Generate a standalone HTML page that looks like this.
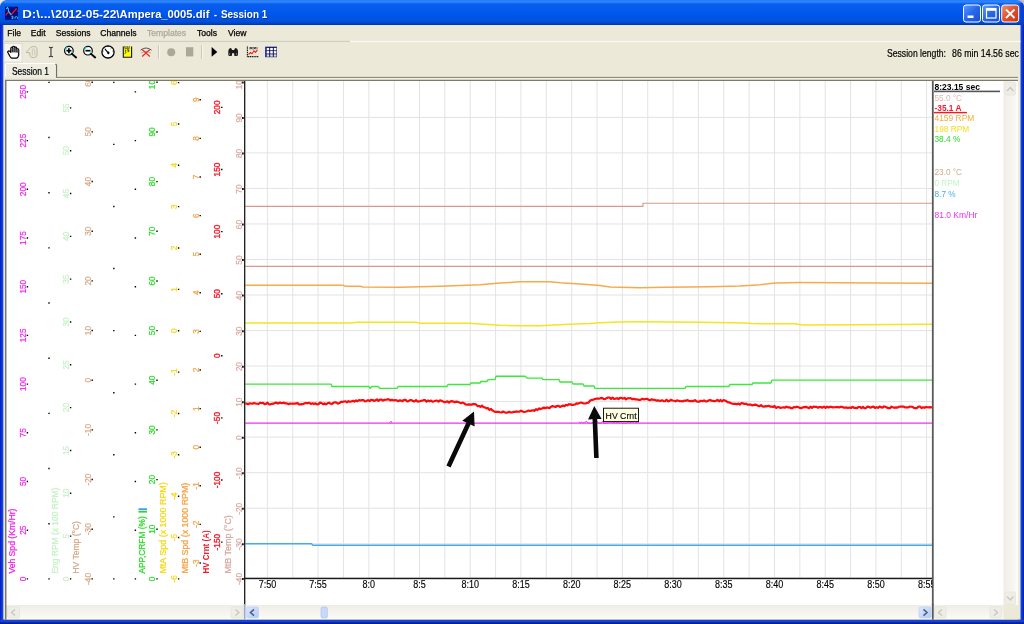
<!DOCTYPE html>
<html><head><meta charset="utf-8"><title>Ampera_0005.dif - Session 1</title>
<style>
html,body{margin:0;padding:0;width:1024px;height:624px;overflow:hidden;background:#ECE9D8;font-family:"Liberation Sans", sans-serif;}
.abs{position:absolute;will-change:transform;}
.menu span{position:absolute;top:26.5px;font-size:8.6px;color:#000;white-space:pre;line-height:12px;-webkit-text-stroke:0.25px currentColor;}
</style></head><body>

<svg class="abs" style="left:0;top:0" width="1024" height="624" viewBox="0 0 1024 624" font-family='"Liberation Sans", sans-serif'>
<defs>
<linearGradient id="tb" x1="0" y1="0" x2="0" y2="1">
<stop offset="0" stop-color="#2B7BF5"/><stop offset="0.08" stop-color="#2E86FF"/><stop offset="0.16" stop-color="#0A5EEC"/>
<stop offset="0.5" stop-color="#0058EE"/><stop offset="0.85" stop-color="#0050DD"/><stop offset="0.93" stop-color="#0046C8"/><stop offset="1" stop-color="#0035A8"/>
</linearGradient>
<linearGradient id="btn" x1="0" y1="0" x2="1" y2="1">
<stop offset="0" stop-color="#5C9CFF"/><stop offset="0.5" stop-color="#2766EC"/><stop offset="1" stop-color="#1A4FD0"/>
</linearGradient>
<linearGradient id="cls" x1="0" y1="0" x2="1" y2="1">
<stop offset="0" stop-color="#F09070"/><stop offset="0.5" stop-color="#E0502A"/><stop offset="1" stop-color="#C83A14"/>
</linearGradient>
<linearGradient id="sbh" x1="0" y1="0" x2="0" y2="1">
<stop offset="0" stop-color="#EEEDE5"/><stop offset="0.5" stop-color="#F5F4EF"/><stop offset="1" stop-color="#FBFBF8"/>
</linearGradient>
<linearGradient id="sbv" x1="0" y1="0" x2="1" y2="0">
<stop offset="0" stop-color="#EEEDE5"/><stop offset="0.5" stop-color="#F5F4EF"/><stop offset="1" stop-color="#FBFBF8"/>
</linearGradient>
<linearGradient id="arrb" x1="0" y1="0" x2="1" y2="1">
<stop offset="0" stop-color="#DCE8FE"/><stop offset="1" stop-color="#B4CBF6"/>
</linearGradient>
<clipPath id="chart"><rect x="6.5" y="81" width="997" height="524"/></clipPath>
<clipPath id="plot"><rect x="245.5" y="81" width="687" height="524"/></clipPath>
</defs>
<rect x="0" y="0" width="1024" height="624" fill="#0A3FD8"/>
<rect x="0" y="0" width="1024" height="25" fill="url(#tb)"/>
<linearGradient id="lb" x1="0" y1="0" x2="1" y2="0"><stop offset="0" stop-color="#0A18C8"/><stop offset="1" stop-color="#0A52EA"/></linearGradient>
<linearGradient id="rb" x1="0" y1="0" x2="1" y2="0"><stop offset="0" stop-color="#0A52EA"/><stop offset="1" stop-color="#0A18B8"/></linearGradient>
<rect x="0" y="25" width="3.3" height="599" fill="url(#lb)"/>
<rect x="1020.5" y="25" width="3.5" height="599" fill="url(#rb)"/>
<rect x="0" y="619.6" width="1024" height="1" fill="#3A4A8A"/>
<rect x="0" y="620.6" width="1024" height="1.8" fill="#0A44F0"/>
<rect x="0" y="622.4" width="1024" height="1.6" fill="#0A1C8C"/>
<rect x="3.3" y="25" width="1017.2" height="594.6" fill="#ECE9D8"/>
<rect x="1020.5" y="3" width="3.5" height="22" fill="#0A3AC8" opacity="0.8"/>
<path d="M1024 0 H1017 Q1023 1 1024 6 Z" fill="#C8B8C8"/>
<path d="M0 0 H6 Q1 1 0 6 Z" fill="#E8E8E8"/>
<rect x="5" y="6.7" width="13" height="13.2" fill="#000C84"/>
<polyline points="5.6,15.4 8.4,11.8 11.6,14.4 16.5,8.4" fill="none" stroke="#F01818" stroke-width="1.3"/>
<path d="M16.5 8.4 L18 12.4" stroke="#B01030" stroke-width="0.9"/>
<polyline points="6.3,8.8 7.5,7.5 8.3,9 8.5,11.2 10.2,13.6 11.3,15.2" fill="none" stroke="#28D0E8" stroke-width="1.1"/>
<path d="M11.4 16.4 H13 V17.4 H11.8 M13 17.4 V18.6 H11.4" fill="none" stroke="#28D0E8" stroke-width="0.9"/>
<path d="M15 18.8 V17.2 Q16.3 15.8 17.6 17.2 V18.8" fill="none" stroke="#28D0E8" stroke-width="1"/>
<text x="23.0" y="18.9" font-size="11.8" font-weight="bold" fill="#0A1E6E" opacity="0.55" textLength="32.6" lengthAdjust="spacingAndGlyphs">D:\...\</text>
<text x="22.2" y="18.2" font-size="11.8" font-weight="bold" fill="#FFFFFF" textLength="32.6" lengthAdjust="spacingAndGlyphs">D:\...\</text>
<text x="56.099999999999994" y="18.9" font-size="11.8" font-weight="bold" fill="#0A1E6E" opacity="0.55" textLength="64.3" lengthAdjust="spacingAndGlyphs">2012-05-22\</text>
<text x="55.3" y="18.2" font-size="11.8" font-weight="bold" fill="#FFFFFF" textLength="64.3" lengthAdjust="spacingAndGlyphs">2012-05-22\</text>
<text x="120.39999999999999" y="18.9" font-size="11.8" font-weight="bold" fill="#0A1E6E" opacity="0.55" textLength="89.8" lengthAdjust="spacingAndGlyphs">Ampera_0005.dif</text>
<text x="119.6" y="18.2" font-size="11.8" font-weight="bold" fill="#FFFFFF" textLength="89.8" lengthAdjust="spacingAndGlyphs">Ampera_0005.dif</text>
<text x="214.8" y="18.9" font-size="11.8" font-weight="bold" fill="#0A1E6E" opacity="0.55" textLength="3.0" lengthAdjust="spacingAndGlyphs">-</text>
<text x="214.0" y="18.2" font-size="11.8" font-weight="bold" fill="#FFFFFF" textLength="3.0" lengthAdjust="spacingAndGlyphs">-</text>
<text x="221.8" y="18.9" font-size="11.8" font-weight="bold" fill="#0A1E6E" opacity="0.55" textLength="46.2" lengthAdjust="spacingAndGlyphs">Session 1</text>
<text x="221.0" y="18.2" font-size="11.8" font-weight="bold" fill="#FFFFFF" textLength="46.2" lengthAdjust="spacingAndGlyphs">Session 1</text>
<rect x="963.5" y="5" width="17" height="17" rx="2.5" fill="url(#btn)" stroke="#FFFFFF" stroke-width="1"/>
<rect x="982.5" y="5" width="17" height="17" rx="2.5" fill="url(#btn)" stroke="#FFFFFF" stroke-width="1"/>
<rect x="1001.7" y="5" width="17" height="17" rx="2.5" fill="url(#cls)" stroke="#FFFFFF" stroke-width="1"/>
<rect x="967.5" y="15.5" width="6" height="2.5" fill="#FFFFFF"/>
<rect x="986.5" y="8.5" width="9.5" height="9.5" fill="none" stroke="#FFFFFF" stroke-width="1.2"/><rect x="986.5" y="8.5" width="9.5" height="2.3" fill="#FFFFFF"/>
<path d="M1006 9.5 L1014.5 18 M1014.5 9.5 L1006 18" stroke="#FFFFFF" stroke-width="1.8"/>
<rect x="3.5" y="40.8" width="1017" height="1.3" fill="#FAF9F4"/>
<rect x="3.5" y="40.8" width="346.5" height="1.3" fill="#CFCDC4"/>
<rect x="4" y="43.5" width="18" height="18.5" fill="#F6F5F0" stroke="#D5D2C4" stroke-width="0.6"/>
<rect x="158.3" y="45" width="1" height="14" fill="#BDB9A8"/><rect x="159.3" y="45" width="0.8" height="14" fill="#FFFFFF"/>
<rect x="201.3" y="45" width="1" height="14" fill="#BDB9A8"/><rect x="202.3" y="45" width="0.8" height="14" fill="#FFFFFF"/>
<path d="M7.6 51.9 L8.7 50.8 Q9.6 50.6 10.7 52.3 L10.8 48.3 Q11.3 46.6 12.5 47.6 L12.6 46.9 Q13.6 45.6 14.6 46.9 L14.7 47.3 Q15.8 46.6 16.6 47.9 L16.7 48.7 Q18 48.4 18.7 49.8 L18.7 55.2 Q18.2 57.7 16.5 58.1 L11.6 58.1 Q10.6 57.8 9.6 55.8 Z" fill="#FFFFFF" stroke="#000" stroke-width="1.2" stroke-linejoin="round"/>
<path d="M11.7 48.2 V52.6 M13.6 47.5 V52.4 M15.6 48 V52.6 M17.6 49.6 V52.8" stroke="#6A6A6A" stroke-width="1.5"/>
<path d="M12.5 47.5 V52.2 M14.6 47.2 V52.2 M16.6 48.2 V52.4" stroke="#000" stroke-width="0.7"/>
<path d="M26.2 52.6 L29.6 48.4 Q31 46.6 33 46.6 L35.2 46.6 Q37 47.2 37 49.2 L37 55.2 Q36.5 57.4 34.6 57.5 L31.8 57.5 Q30.2 57.2 30 55.6 L30 52.8 Z" fill="none" stroke="#B5B2A3" stroke-width="0.9" stroke-linejoin="round"/>
<path d="M31.6 49.2 Q33.4 48.4 34.8 49.6 L34.8 55.5 M32.4 50 V55.5" fill="none" stroke="#C2BFB1" stroke-width="0.8"/>
<path d="M48.9 47.3 Q50 47 50.95 48 Q52 47 53 47.3 M50.95 48 V56 M48.9 56.6 Q50 56.8 50.95 56 Q52 56.8 53 56.6" stroke="#3A3A3A" stroke-width="1.1" fill="none"/>
<circle cx="68.9" cy="50.7" r="4.3" fill="#FFFFFF" stroke="#000" stroke-width="1.2"/>
<path d="M65.5 49.6 Q66.30000000000001 47.2 68.30000000000001 47.1" stroke="#22D8F0" stroke-width="1.3" fill="none"/>
<path d="M70.5 53.8 Q72.2 53 72.5 51.6" stroke="#22D8F0" stroke-width="1.1" fill="none"/>
<path d="M71.9 53.9 L76.10000000000001 57.5" stroke="#000" stroke-width="1.9" stroke-linecap="round"/>
<path d="M66.4 50.7 H71.4" stroke="#000" stroke-width="1.7"/>
<path d="M68.9 48.2 V53.2" stroke="#000" stroke-width="1.7"/>
<circle cx="88" cy="50.7" r="4.3" fill="#FFFFFF" stroke="#000" stroke-width="1.2"/>
<path d="M84.6 49.6 Q85.4 47.2 87.4 47.1" stroke="#22D8F0" stroke-width="1.3" fill="none"/>
<path d="M89.6 53.8 Q91.3 53 91.6 51.6" stroke="#22D8F0" stroke-width="1.1" fill="none"/>
<path d="M91 53.9 L95.2 57.5" stroke="#000" stroke-width="1.9" stroke-linecap="round"/>
<path d="M85.5 50.7 H90.5" stroke="#000" stroke-width="1.7"/>
<circle cx="108" cy="51.9" r="6.1" fill="#FFFFFF" stroke="#000" stroke-width="1.3"/>
<path d="M104.4 47.8 L105.3 48.7 M108 45.8 V47.1 M111.6 47.8 L110.7 48.7 M102.2 51.2 H103.4 M113.8 51.2 H112.6" stroke="#000" stroke-width="0.9"/>
<path d="M105 49.2 L108.3 52.8" stroke="#000" stroke-width="1.2"/><path d="M108.3 51.2 L109.8 52.9 L108.3 54.4 L106.9 52.9 Z" fill="#000"/>
<rect x="123.3" y="46.6" width="8.2" height="10.6" fill="#FFFF00"/>
<path d="M123.3 46.6 V57.2 H131.6 V46.6" fill="none" stroke="#10103A" stroke-width="1.1"/>
<path d="M124.3 46.1 V47.6 M126 46.1 V47.6 M127.7 46.1 V47.6 M129.4 46.1 V47.6" stroke="#1A1A1A" stroke-width="0.7"/>
<path d="M124.6 48.2 H129.6 M124.8 50 Q126 49.6 126 51 Q125.2 51.6 125.8 52.4 Q125.6 53.5 124.6 53.6 M127 49.8 H128.8 V51.5 M128.2 50.6 V52.2" stroke="#1A1A1A" stroke-width="0.8" fill="none"/>
<path d="M140.5 50.2 Q146 45.8 151.6 50.2" fill="none" stroke="#444" stroke-width="0.9"/><path d="M141 53.2 Q146 49.8 151 53.2" fill="none" stroke="#9A9A9A" stroke-width="0.8"/><path d="M142.2 49.6 L149.8 56.6 M149.8 49.6 L142.2 56.6" stroke="#E83030" stroke-width="1.3"/>
<circle cx="171.2" cy="52.2" r="4" fill="#ACA899"/>
<rect x="186" y="47.2" width="7.3" height="9.2" fill="#ACA899"/>
<path d="M211.6 47 L217.3 51.9 L211.6 56.8 Z" fill="#000"/>
<path d="M228.3 51 Q228.6 48.5 230.4 48 Q231.8 48.2 232 50 L234.2 50 Q234.5 48.2 235.9 48 Q237.7 48.5 238 51 L238 55 Q237.6 56.2 236 56 L234.6 56 Q234 55.2 234.2 53.2 L232 53.2 Q232.2 55.2 231.6 56 L230.2 56 Q228.6 56.2 228.3 55 Z" fill="#1A1A1A"/>
<path d="M229.6 53 V55 M236.6 53 V55" stroke="#8A8A8A" stroke-width="0.8"/>
<path d="M247.4 46.5 V56.6 H258.3" stroke="#111" stroke-width="1.1" fill="none" stroke-dasharray="1.2,0.6"/>
<path d="M250 47 L252.3 49.5 M252.3 47 L250 49.5 M253.5 47 L256 49.5 M256 47 L253.5 49.5 M249 48 H258" stroke="#222" stroke-width="0.7"/>
<polyline points="248.5,54.5 250.5,52.6 252,53.8 254,50.8 255.5,52.4 257.5,49.8" fill="none" stroke="#F02020" stroke-width="1.1"/>
<path d="M249.5 55.2 H257.5" stroke="#E0E0E0" stroke-width="0.8"/>
<rect x="265.2" y="46.7" width="11.7" height="10.5" fill="#0C1060"/>
<rect x="266.6" y="47.9" width="2.6" height="2.4" fill="#FFFFFF"/>
<rect x="270.2" y="47.9" width="2.6" height="2.4" fill="#FFFFFF"/>
<rect x="273.8" y="47.9" width="2.6" height="2.4" fill="#FFFFFF"/>
<rect x="266.6" y="51.1" width="2.6" height="2.4" fill="#FFFFFF"/>
<rect x="270.2" y="51.1" width="2.6" height="2.4" fill="#FFFFFF"/>
<rect x="273.8" y="51.1" width="2.6" height="2.4" fill="#FFFFFF"/>
<rect x="266.6" y="54.3" width="2.6" height="2.4" fill="#D8D8E0"/>
<rect x="270.2" y="54.3" width="2.6" height="2.4" fill="#D8D8E0"/>
<rect x="273.8" y="54.3" width="2.6" height="2.4" fill="#D8D8E0"/>
<rect x="265.6" y="47.4" width="0.9" height="3" fill="#3040F0"/><rect x="265.6" y="53.6" width="0.9" height="3" fill="#3040F0"/>
<text x="887" y="57" font-size="10.8" fill="#000" stroke="#000" stroke-width="0.2" textLength="59" lengthAdjust="spacingAndGlyphs">Session length:</text>
<text x="952" y="57" font-size="10.8" fill="#000" stroke="#000" stroke-width="0.2" textLength="67" lengthAdjust="spacingAndGlyphs">86 min 14.56 sec</text>
<rect x="56" y="76.9" width="962" height="1" fill="#7E7A6A"/>
<rect x="56" y="77.9" width="962" height="0.8" fill="#FFFFFF" opacity="0.5"/>
<path d="M5.5 77 V64.5 Q5.5 63.5 6.5 63.5 H55 L56 64.5 V77.5" fill="#EFEDE2" stroke="#FFFFFF" stroke-width="1"/>
<path d="M55.5 64 L56.5 65 V77.5" fill="none" stroke="#716F64" stroke-width="1.2"/>
<text x="12" y="74.5" font-size="10.2" fill="#000" stroke="#000" stroke-width="0.2" textLength="37" lengthAdjust="spacingAndGlyphs">Session 1</text>
<rect x="5" y="79.8" width="1013" height="540" fill="#7E7A6A"/>
<rect x="6.5" y="81" width="997.5" height="524" fill="#FFFFFF"/>
</svg>
<svg class="abs" style="left:0;top:0" width="1024" height="624" viewBox="0 0 1024 624" font-family='"Liberation Sans", sans-serif'>
<defs><clipPath id="chart2"><rect x="6.5" y="81" width="997.5" height="524"/></clipPath><clipPath id="plot2"><rect x="245.3" y="81" width="687" height="524"/></clipPath></defs>
<g clip-path="url(#chart2)">
<path d="M246 117.37 H932 M246 152.90 H932 M246 188.43 H932 M246 223.96 H932 M246 259.49 H932 M246 295.02 H932 M246 330.55 H932 M246 366.08 H932 M246 401.61 H932 M246 437.14 H932 M246 472.67 H932 M246 508.20 H932 M246 543.73 H932 M267.40 81 V577.5 M292.75 81 V577.5 M318.11 81 V577.5 M343.46 81 V577.5 M368.82 81 V577.5 M394.17 81 V577.5 M419.53 81 V577.5 M444.88 81 V577.5 M470.24 81 V577.5 M495.59 81 V577.5 M520.95 81 V577.5 M546.31 81 V577.5 M571.66 81 V577.5 M597.01 81 V577.5 M622.37 81 V577.5 M647.72 81 V577.5 M673.08 81 V577.5 M698.43 81 V577.5 M723.79 81 V577.5 M749.14 81 V577.5 M774.50 81 V577.5 M799.86 81 V577.5 M825.21 81 V577.5 M850.56 81 V577.5 M875.92 81 V577.5 M901.27 81 V577.5 M926.63 81 V577.5" stroke="#E3E3E3" stroke-width="1" fill="none"/>
<g transform="translate(0 0.6)">
<path d="M26.70 577.60 h1.4 v1.4 h-1.4 Z M26.70 528.90 h1.4 v1.4 h-1.4 Z M26.70 480.20 h1.4 v1.4 h-1.4 Z M26.70 431.50 h1.4 v1.4 h-1.4 Z M26.70 382.80 h1.4 v1.4 h-1.4 Z M26.70 334.10 h1.4 v1.4 h-1.4 Z M26.70 285.40 h1.4 v1.4 h-1.4 Z M26.70 236.70 h1.4 v1.4 h-1.4 Z M26.70 188.00 h1.4 v1.4 h-1.4 Z M26.70 139.30 h1.4 v1.4 h-1.4 Z M26.70 90.60 h1.4 v1.4 h-1.4 Z M48.30 577.60 h1.4 v1.4 h-1.4 Z M48.30 522.43 h1.4 v1.4 h-1.4 Z M48.30 467.26 h1.4 v1.4 h-1.4 Z M48.30 412.09 h1.4 v1.4 h-1.4 Z M48.30 356.92 h1.4 v1.4 h-1.4 Z M48.30 301.75 h1.4 v1.4 h-1.4 Z M48.30 246.58 h1.4 v1.4 h-1.4 Z M48.30 191.41 h1.4 v1.4 h-1.4 Z M48.30 136.24 h1.4 v1.4 h-1.4 Z M48.30 81.07 h1.4 v1.4 h-1.4 Z M69.90 577.60 h1.4 v1.4 h-1.4 Z M69.90 534.78 h1.4 v1.4 h-1.4 Z M69.90 491.96 h1.4 v1.4 h-1.4 Z M69.90 449.14 h1.4 v1.4 h-1.4 Z M69.90 406.32 h1.4 v1.4 h-1.4 Z M69.90 363.50 h1.4 v1.4 h-1.4 Z M69.90 320.68 h1.4 v1.4 h-1.4 Z M69.90 277.86 h1.4 v1.4 h-1.4 Z M69.90 235.04 h1.4 v1.4 h-1.4 Z M69.90 192.22 h1.4 v1.4 h-1.4 Z M69.90 149.40 h1.4 v1.4 h-1.4 Z M69.90 106.58 h1.4 v1.4 h-1.4 Z M91.50 577.60 h1.4 v1.4 h-1.4 Z M91.50 527.93 h1.4 v1.4 h-1.4 Z M91.50 478.26 h1.4 v1.4 h-1.4 Z M91.50 428.59 h1.4 v1.4 h-1.4 Z M91.50 378.92 h1.4 v1.4 h-1.4 Z M91.50 329.25 h1.4 v1.4 h-1.4 Z M91.50 279.58 h1.4 v1.4 h-1.4 Z M91.50 229.91 h1.4 v1.4 h-1.4 Z M91.50 180.24 h1.4 v1.4 h-1.4 Z M91.50 130.57 h1.4 v1.4 h-1.4 Z M91.50 80.90 h1.4 v1.4 h-1.4 Z M113.10 577.60 h1.4 v1.4 h-1.4 Z M113.10 515.53 h1.4 v1.4 h-1.4 Z M113.10 453.46 h1.4 v1.4 h-1.4 Z M113.10 391.39 h1.4 v1.4 h-1.4 Z M113.10 329.32 h1.4 v1.4 h-1.4 Z M113.10 267.25 h1.4 v1.4 h-1.4 Z M113.10 205.18 h1.4 v1.4 h-1.4 Z M113.10 143.11 h1.4 v1.4 h-1.4 Z M113.10 81.04 h1.4 v1.4 h-1.4 Z M134.70 577.60 h1.4 v1.4 h-1.4 Z M134.70 528.90 h1.4 v1.4 h-1.4 Z M134.70 480.20 h1.4 v1.4 h-1.4 Z M134.70 431.50 h1.4 v1.4 h-1.4 Z M134.70 382.80 h1.4 v1.4 h-1.4 Z M134.70 334.10 h1.4 v1.4 h-1.4 Z M134.70 285.40 h1.4 v1.4 h-1.4 Z M134.70 236.70 h1.4 v1.4 h-1.4 Z M134.70 188.00 h1.4 v1.4 h-1.4 Z M134.70 139.30 h1.4 v1.4 h-1.4 Z M134.70 90.60 h1.4 v1.4 h-1.4 Z M156.30 577.60 h1.4 v1.4 h-1.4 Z M156.30 527.94 h1.4 v1.4 h-1.4 Z M156.30 478.28 h1.4 v1.4 h-1.4 Z M156.30 428.62 h1.4 v1.4 h-1.4 Z M156.30 378.96 h1.4 v1.4 h-1.4 Z M156.30 329.30 h1.4 v1.4 h-1.4 Z M156.30 279.64 h1.4 v1.4 h-1.4 Z M156.30 229.98 h1.4 v1.4 h-1.4 Z M156.30 180.32 h1.4 v1.4 h-1.4 Z M156.30 130.66 h1.4 v1.4 h-1.4 Z M156.30 81.00 h1.4 v1.4 h-1.4 Z M177.90 577.60 h1.4 v1.4 h-1.4 Z M177.90 536.24 h1.4 v1.4 h-1.4 Z M177.90 494.88 h1.4 v1.4 h-1.4 Z M177.90 453.52 h1.4 v1.4 h-1.4 Z M177.90 412.16 h1.4 v1.4 h-1.4 Z M177.90 370.80 h1.4 v1.4 h-1.4 Z M177.90 329.44 h1.4 v1.4 h-1.4 Z M177.90 288.08 h1.4 v1.4 h-1.4 Z M177.90 246.72 h1.4 v1.4 h-1.4 Z M177.90 205.36 h1.4 v1.4 h-1.4 Z M177.90 164.00 h1.4 v1.4 h-1.4 Z M177.90 122.64 h1.4 v1.4 h-1.4 Z M177.90 81.28 h1.4 v1.4 h-1.4 Z M199.50 561.70 h1.4 v1.4 h-1.4 Z M199.50 523.10 h1.4 v1.4 h-1.4 Z M199.50 484.50 h1.4 v1.4 h-1.4 Z M199.50 445.90 h1.4 v1.4 h-1.4 Z M199.50 407.30 h1.4 v1.4 h-1.4 Z M199.50 368.70 h1.4 v1.4 h-1.4 Z M199.50 330.10 h1.4 v1.4 h-1.4 Z M199.50 291.50 h1.4 v1.4 h-1.4 Z M199.50 252.90 h1.4 v1.4 h-1.4 Z M199.50 214.30 h1.4 v1.4 h-1.4 Z M199.50 175.70 h1.4 v1.4 h-1.4 Z M199.50 137.10 h1.4 v1.4 h-1.4 Z M199.50 98.50 h1.4 v1.4 h-1.4 Z M221.10 540.80 h1.4 v1.4 h-1.4 Z M221.10 478.70 h1.4 v1.4 h-1.4 Z M221.10 416.60 h1.4 v1.4 h-1.4 Z M221.10 354.50 h1.4 v1.4 h-1.4 Z M221.10 292.40 h1.4 v1.4 h-1.4 Z M221.10 230.30 h1.4 v1.4 h-1.4 Z M221.10 168.20 h1.4 v1.4 h-1.4 Z M221.10 106.10 h1.4 v1.4 h-1.4 Z M242.10 577.30 h1.6 v2 h-1.6 Z M242.10 542.73 h1.6 v2 h-1.6 Z M242.10 507.20 h1.6 v2 h-1.6 Z M242.10 471.67 h1.6 v2 h-1.6 Z M242.10 436.14 h1.6 v2 h-1.6 Z M242.10 400.61 h1.6 v2 h-1.6 Z M242.10 365.08 h1.6 v2 h-1.6 Z M242.10 329.55 h1.6 v2 h-1.6 Z M242.10 294.02 h1.6 v2 h-1.6 Z M242.10 258.49 h1.6 v2 h-1.6 Z M242.10 222.96 h1.6 v2 h-1.6 Z M242.10 187.43 h1.6 v2 h-1.6 Z M242.10 151.90 h1.6 v2 h-1.6 Z M242.10 116.37 h1.6 v2 h-1.6 Z M242.10 80.84 h1.6 v2 h-1.6 Z" fill="#000"/>
<text transform="translate(25.80 578.30) rotate(-90)" text-anchor="middle" font-size="8.3" fill="#F020F0" stroke="#F020F0" stroke-width="0.2">0</text>
<text transform="translate(25.80 529.60) rotate(-90)" text-anchor="middle" font-size="8.3" fill="#F020F0" stroke="#F020F0" stroke-width="0.2">25</text>
<text transform="translate(25.80 480.90) rotate(-90)" text-anchor="middle" font-size="8.3" fill="#F020F0" stroke="#F020F0" stroke-width="0.2">50</text>
<text transform="translate(25.80 432.20) rotate(-90)" text-anchor="middle" font-size="8.3" fill="#F020F0" stroke="#F020F0" stroke-width="0.2">75</text>
<text transform="translate(25.80 383.50) rotate(-90)" text-anchor="middle" font-size="8.3" fill="#F020F0" stroke="#F020F0" stroke-width="0.2">100</text>
<text transform="translate(25.80 334.80) rotate(-90)" text-anchor="middle" font-size="8.3" fill="#F020F0" stroke="#F020F0" stroke-width="0.2">125</text>
<text transform="translate(25.80 286.10) rotate(-90)" text-anchor="middle" font-size="8.3" fill="#F020F0" stroke="#F020F0" stroke-width="0.2">150</text>
<text transform="translate(25.80 237.40) rotate(-90)" text-anchor="middle" font-size="8.3" fill="#F020F0" stroke="#F020F0" stroke-width="0.2">175</text>
<text transform="translate(25.80 188.70) rotate(-90)" text-anchor="middle" font-size="8.3" fill="#F020F0" stroke="#F020F0" stroke-width="0.2">200</text>
<text transform="translate(25.80 140.00) rotate(-90)" text-anchor="middle" font-size="8.3" fill="#F020F0" stroke="#F020F0" stroke-width="0.2">225</text>
<text transform="translate(25.80 91.30) rotate(-90)" text-anchor="middle" font-size="8.3" fill="#F020F0" stroke="#F020F0" stroke-width="0.2">250</text>
<text transform="translate(15.20 573) rotate(-90)" font-size="8.6" fill="#F020F0" stroke="#F020F0" stroke-width="0.25" textLength="65" lengthAdjust="spacingAndGlyphs">Veh Spd (Km/Hr)</text>
<text transform="translate(69.00 578.30) rotate(-90)" text-anchor="middle" font-size="8.3" fill="#C4F2C4" stroke="#C4F2C4" stroke-width="0.2">0</text>
<text transform="translate(69.00 535.48) rotate(-90)" text-anchor="middle" font-size="8.3" fill="#C4F2C4" stroke="#C4F2C4" stroke-width="0.2">5</text>
<text transform="translate(69.00 492.66) rotate(-90)" text-anchor="middle" font-size="8.3" fill="#C4F2C4" stroke="#C4F2C4" stroke-width="0.2">10</text>
<text transform="translate(69.00 449.84) rotate(-90)" text-anchor="middle" font-size="8.3" fill="#C4F2C4" stroke="#C4F2C4" stroke-width="0.2">15</text>
<text transform="translate(69.00 407.02) rotate(-90)" text-anchor="middle" font-size="8.3" fill="#C4F2C4" stroke="#C4F2C4" stroke-width="0.2">20</text>
<text transform="translate(69.00 364.20) rotate(-90)" text-anchor="middle" font-size="8.3" fill="#C4F2C4" stroke="#C4F2C4" stroke-width="0.2">25</text>
<text transform="translate(69.00 321.38) rotate(-90)" text-anchor="middle" font-size="8.3" fill="#C4F2C4" stroke="#C4F2C4" stroke-width="0.2">30</text>
<text transform="translate(69.00 278.56) rotate(-90)" text-anchor="middle" font-size="8.3" fill="#C4F2C4" stroke="#C4F2C4" stroke-width="0.2">35</text>
<text transform="translate(69.00 235.74) rotate(-90)" text-anchor="middle" font-size="8.3" fill="#C4F2C4" stroke="#C4F2C4" stroke-width="0.2">40</text>
<text transform="translate(69.00 192.92) rotate(-90)" text-anchor="middle" font-size="8.3" fill="#C4F2C4" stroke="#C4F2C4" stroke-width="0.2">45</text>
<text transform="translate(69.00 150.10) rotate(-90)" text-anchor="middle" font-size="8.3" fill="#C4F2C4" stroke="#C4F2C4" stroke-width="0.2">50</text>
<text transform="translate(69.00 107.28) rotate(-90)" text-anchor="middle" font-size="8.3" fill="#C4F2C4" stroke="#C4F2C4" stroke-width="0.2">55</text>
<text transform="translate(57.50 573) rotate(-90)" font-size="8.6" fill="#C4F2C4" stroke="#C4F2C4" stroke-width="0.25" textLength="86" lengthAdjust="spacingAndGlyphs">Eng RPM (x 100 RPM)</text>
<text transform="translate(90.60 578.30) rotate(-90)" text-anchor="middle" font-size="8.3" fill="#D4A888" stroke="#D4A888" stroke-width="0.2">-40</text>
<text transform="translate(90.60 528.63) rotate(-90)" text-anchor="middle" font-size="8.3" fill="#D4A888" stroke="#D4A888" stroke-width="0.2">-30</text>
<text transform="translate(90.60 478.96) rotate(-90)" text-anchor="middle" font-size="8.3" fill="#D4A888" stroke="#D4A888" stroke-width="0.2">-20</text>
<text transform="translate(90.60 429.29) rotate(-90)" text-anchor="middle" font-size="8.3" fill="#D4A888" stroke="#D4A888" stroke-width="0.2">-10</text>
<text transform="translate(90.60 379.62) rotate(-90)" text-anchor="middle" font-size="8.3" fill="#D4A888" stroke="#D4A888" stroke-width="0.2">0</text>
<text transform="translate(90.60 329.95) rotate(-90)" text-anchor="middle" font-size="8.3" fill="#D4A888" stroke="#D4A888" stroke-width="0.2">10</text>
<text transform="translate(90.60 280.28) rotate(-90)" text-anchor="middle" font-size="8.3" fill="#D4A888" stroke="#D4A888" stroke-width="0.2">20</text>
<text transform="translate(90.60 230.61) rotate(-90)" text-anchor="middle" font-size="8.3" fill="#D4A888" stroke="#D4A888" stroke-width="0.2">30</text>
<text transform="translate(90.60 180.94) rotate(-90)" text-anchor="middle" font-size="8.3" fill="#D4A888" stroke="#D4A888" stroke-width="0.2">40</text>
<text transform="translate(90.60 131.27) rotate(-90)" text-anchor="middle" font-size="8.3" fill="#D4A888" stroke="#D4A888" stroke-width="0.2">50</text>
<text transform="translate(90.60 81.60) rotate(-90)" text-anchor="middle" font-size="8.3" fill="#D4A888" stroke="#D4A888" stroke-width="0.2">60</text>
<text transform="translate(79.30 573) rotate(-90)" font-size="8.6" fill="#D4A888" stroke="#D4A888" stroke-width="0.25" textLength="52.5" lengthAdjust="spacingAndGlyphs">HV Temp (°C)</text>
<text transform="translate(155.40 578.30) rotate(-90)" text-anchor="middle" font-size="8.3" fill="#22DD22" stroke="#22DD22" stroke-width="0.2">0</text>
<text transform="translate(155.40 528.64) rotate(-90)" text-anchor="middle" font-size="8.3" fill="#22DD22" stroke="#22DD22" stroke-width="0.2">10</text>
<text transform="translate(155.40 478.98) rotate(-90)" text-anchor="middle" font-size="8.3" fill="#22DD22" stroke="#22DD22" stroke-width="0.2">20</text>
<text transform="translate(155.40 429.32) rotate(-90)" text-anchor="middle" font-size="8.3" fill="#22DD22" stroke="#22DD22" stroke-width="0.2">30</text>
<text transform="translate(155.40 379.66) rotate(-90)" text-anchor="middle" font-size="8.3" fill="#22DD22" stroke="#22DD22" stroke-width="0.2">40</text>
<text transform="translate(155.40 330.00) rotate(-90)" text-anchor="middle" font-size="8.3" fill="#22DD22" stroke="#22DD22" stroke-width="0.2">50</text>
<text transform="translate(155.40 280.34) rotate(-90)" text-anchor="middle" font-size="8.3" fill="#22DD22" stroke="#22DD22" stroke-width="0.2">60</text>
<text transform="translate(155.40 230.68) rotate(-90)" text-anchor="middle" font-size="8.3" fill="#22DD22" stroke="#22DD22" stroke-width="0.2">70</text>
<text transform="translate(155.40 181.02) rotate(-90)" text-anchor="middle" font-size="8.3" fill="#22DD22" stroke="#22DD22" stroke-width="0.2">80</text>
<text transform="translate(155.40 131.36) rotate(-90)" text-anchor="middle" font-size="8.3" fill="#22DD22" stroke="#22DD22" stroke-width="0.2">90</text>
<text transform="translate(155.40 81.70) rotate(-90)" text-anchor="middle" font-size="8.3" fill="#22DD22" stroke="#22DD22" stroke-width="0.2">100</text>
<text transform="translate(145.20 573) rotate(-90)" font-size="8.6" fill="#22DD22" stroke="#22DD22" stroke-width="0.25" textLength="57.3" lengthAdjust="spacingAndGlyphs">APP,CRFM (%)</text>
<text transform="translate(177.00 578.30) rotate(-90)" text-anchor="middle" font-size="8.3" fill="#F4D810" stroke="#F4D810" stroke-width="0.2">-6</text>
<text transform="translate(177.00 536.94) rotate(-90)" text-anchor="middle" font-size="8.3" fill="#F4D810" stroke="#F4D810" stroke-width="0.2">-5</text>
<text transform="translate(177.00 495.58) rotate(-90)" text-anchor="middle" font-size="8.3" fill="#F4D810" stroke="#F4D810" stroke-width="0.2">-4</text>
<text transform="translate(177.00 454.22) rotate(-90)" text-anchor="middle" font-size="8.3" fill="#F4D810" stroke="#F4D810" stroke-width="0.2">-3</text>
<text transform="translate(177.00 412.86) rotate(-90)" text-anchor="middle" font-size="8.3" fill="#F4D810" stroke="#F4D810" stroke-width="0.2">-2</text>
<text transform="translate(177.00 371.50) rotate(-90)" text-anchor="middle" font-size="8.3" fill="#F4D810" stroke="#F4D810" stroke-width="0.2">-1</text>
<text transform="translate(177.00 330.14) rotate(-90)" text-anchor="middle" font-size="8.3" fill="#F4D810" stroke="#F4D810" stroke-width="0.2">0</text>
<text transform="translate(177.00 288.78) rotate(-90)" text-anchor="middle" font-size="8.3" fill="#F4D810" stroke="#F4D810" stroke-width="0.2">1</text>
<text transform="translate(177.00 247.42) rotate(-90)" text-anchor="middle" font-size="8.3" fill="#F4D810" stroke="#F4D810" stroke-width="0.2">2</text>
<text transform="translate(177.00 206.06) rotate(-90)" text-anchor="middle" font-size="8.3" fill="#F4D810" stroke="#F4D810" stroke-width="0.2">3</text>
<text transform="translate(177.00 164.70) rotate(-90)" text-anchor="middle" font-size="8.3" fill="#F4D810" stroke="#F4D810" stroke-width="0.2">4</text>
<text transform="translate(177.00 123.34) rotate(-90)" text-anchor="middle" font-size="8.3" fill="#F4D810" stroke="#F4D810" stroke-width="0.2">5</text>
<text transform="translate(177.00 81.98) rotate(-90)" text-anchor="middle" font-size="8.3" fill="#F4D810" stroke="#F4D810" stroke-width="0.2">6</text>
<text transform="translate(166.00 573) rotate(-90)" font-size="8.6" fill="#F4D810" stroke="#F4D810" stroke-width="0.25" textLength="91.4" lengthAdjust="spacingAndGlyphs">MtA Spd (x 1000 RPM)</text>
<text transform="translate(198.60 562.40) rotate(-90)" text-anchor="middle" font-size="8.3" fill="#F6A040" stroke="#F6A040" stroke-width="0.2">-3</text>
<text transform="translate(198.60 523.80) rotate(-90)" text-anchor="middle" font-size="8.3" fill="#F6A040" stroke="#F6A040" stroke-width="0.2">-2</text>
<text transform="translate(198.60 485.20) rotate(-90)" text-anchor="middle" font-size="8.3" fill="#F6A040" stroke="#F6A040" stroke-width="0.2">-1</text>
<text transform="translate(198.60 446.60) rotate(-90)" text-anchor="middle" font-size="8.3" fill="#F6A040" stroke="#F6A040" stroke-width="0.2">0</text>
<text transform="translate(198.60 408.00) rotate(-90)" text-anchor="middle" font-size="8.3" fill="#F6A040" stroke="#F6A040" stroke-width="0.2">1</text>
<text transform="translate(198.60 369.40) rotate(-90)" text-anchor="middle" font-size="8.3" fill="#F6A040" stroke="#F6A040" stroke-width="0.2">2</text>
<text transform="translate(198.60 330.80) rotate(-90)" text-anchor="middle" font-size="8.3" fill="#F6A040" stroke="#F6A040" stroke-width="0.2">3</text>
<text transform="translate(198.60 292.20) rotate(-90)" text-anchor="middle" font-size="8.3" fill="#F6A040" stroke="#F6A040" stroke-width="0.2">4</text>
<text transform="translate(198.60 253.60) rotate(-90)" text-anchor="middle" font-size="8.3" fill="#F6A040" stroke="#F6A040" stroke-width="0.2">5</text>
<text transform="translate(198.60 215.00) rotate(-90)" text-anchor="middle" font-size="8.3" fill="#F6A040" stroke="#F6A040" stroke-width="0.2">6</text>
<text transform="translate(198.60 176.40) rotate(-90)" text-anchor="middle" font-size="8.3" fill="#F6A040" stroke="#F6A040" stroke-width="0.2">7</text>
<text transform="translate(198.60 137.80) rotate(-90)" text-anchor="middle" font-size="8.3" fill="#F6A040" stroke="#F6A040" stroke-width="0.2">8</text>
<text transform="translate(198.60 99.20) rotate(-90)" text-anchor="middle" font-size="8.3" fill="#F6A040" stroke="#F6A040" stroke-width="0.2">9</text>
<text transform="translate(187.50 573) rotate(-90)" font-size="8.6" fill="#F6A040" stroke="#F6A040" stroke-width="0.25" textLength="90.8" lengthAdjust="spacingAndGlyphs">MtB Spd (x 1000 RPM)</text>
<text transform="translate(220.20 541.50) rotate(-90)" text-anchor="middle" font-size="8.3" fill="#F01A2A" stroke="#F01A2A" stroke-width="0.35">-150</text>
<text transform="translate(220.20 479.40) rotate(-90)" text-anchor="middle" font-size="8.3" fill="#F01A2A" stroke="#F01A2A" stroke-width="0.35">-100</text>
<text transform="translate(220.20 417.30) rotate(-90)" text-anchor="middle" font-size="8.3" fill="#F01A2A" stroke="#F01A2A" stroke-width="0.35">-50</text>
<text transform="translate(220.20 355.20) rotate(-90)" text-anchor="middle" font-size="8.3" fill="#F01A2A" stroke="#F01A2A" stroke-width="0.35">0</text>
<text transform="translate(220.20 293.10) rotate(-90)" text-anchor="middle" font-size="8.3" fill="#F01A2A" stroke="#F01A2A" stroke-width="0.35">50</text>
<text transform="translate(220.20 231.00) rotate(-90)" text-anchor="middle" font-size="8.3" fill="#F01A2A" stroke="#F01A2A" stroke-width="0.35">100</text>
<text transform="translate(220.20 168.90) rotate(-90)" text-anchor="middle" font-size="8.3" fill="#F01A2A" stroke="#F01A2A" stroke-width="0.35">150</text>
<text transform="translate(220.20 106.80) rotate(-90)" text-anchor="middle" font-size="8.3" fill="#F01A2A" stroke="#F01A2A" stroke-width="0.35">200</text>
<text transform="translate(209.30 573) rotate(-90)" font-size="8.6" fill="#F01A2A" font-weight="bold" textLength="43.2" lengthAdjust="spacingAndGlyphs">HV Crnt (A)</text>
<text transform="translate(242.00 578.30) rotate(-90)" text-anchor="middle" font-size="8.3" fill="#D8A8A0" stroke="#D8A8A0" stroke-width="0.2">-40</text>
<text transform="translate(242.00 543.73) rotate(-90)" text-anchor="middle" font-size="8.3" fill="#D8A8A0" stroke="#D8A8A0" stroke-width="0.2">-30</text>
<text transform="translate(242.00 508.20) rotate(-90)" text-anchor="middle" font-size="8.3" fill="#D8A8A0" stroke="#D8A8A0" stroke-width="0.2">-20</text>
<text transform="translate(242.00 472.67) rotate(-90)" text-anchor="middle" font-size="8.3" fill="#D8A8A0" stroke="#D8A8A0" stroke-width="0.2">-10</text>
<text transform="translate(242.00 437.14) rotate(-90)" text-anchor="middle" font-size="8.3" fill="#D8A8A0" stroke="#D8A8A0" stroke-width="0.2">0</text>
<text transform="translate(242.00 401.61) rotate(-90)" text-anchor="middle" font-size="8.3" fill="#D8A8A0" stroke="#D8A8A0" stroke-width="0.2">10</text>
<text transform="translate(242.00 366.08) rotate(-90)" text-anchor="middle" font-size="8.3" fill="#D8A8A0" stroke="#D8A8A0" stroke-width="0.2">20</text>
<text transform="translate(242.00 330.55) rotate(-90)" text-anchor="middle" font-size="8.3" fill="#D8A8A0" stroke="#D8A8A0" stroke-width="0.2">30</text>
<text transform="translate(242.00 295.02) rotate(-90)" text-anchor="middle" font-size="8.3" fill="#D8A8A0" stroke="#D8A8A0" stroke-width="0.2">40</text>
<text transform="translate(242.00 259.49) rotate(-90)" text-anchor="middle" font-size="8.3" fill="#D8A8A0" stroke="#D8A8A0" stroke-width="0.2">50</text>
<text transform="translate(242.00 223.96) rotate(-90)" text-anchor="middle" font-size="8.3" fill="#D8A8A0" stroke="#D8A8A0" stroke-width="0.2">60</text>
<text transform="translate(242.00 188.43) rotate(-90)" text-anchor="middle" font-size="8.3" fill="#D8A8A0" stroke="#D8A8A0" stroke-width="0.2">70</text>
<text transform="translate(242.00 152.90) rotate(-90)" text-anchor="middle" font-size="8.3" fill="#D8A8A0" stroke="#D8A8A0" stroke-width="0.2">80</text>
<text transform="translate(242.00 117.37) rotate(-90)" text-anchor="middle" font-size="8.3" fill="#D8A8A0" stroke="#D8A8A0" stroke-width="0.2">90</text>
<text transform="translate(242.00 81.84) rotate(-90)" text-anchor="middle" font-size="8.3" fill="#D8A8A0" stroke="#D8A8A0" stroke-width="0.2">100</text>
<text transform="translate(231.00 573) rotate(-90)" font-size="8.6" fill="#D8A8A0" stroke="#D8A8A0" stroke-width="0.25" textLength="58.4" lengthAdjust="spacingAndGlyphs">MtB Temp (°C)</text>
</g>
<rect x="138.5" y="508.3" width="8.5" height="1.7" fill="#3C9CF0"/><rect x="138.5" y="510.8" width="8.5" height="1.8" fill="#22DD22"/>
</g>
<g clip-path="url(#plot2)" fill="none" stroke-linejoin="round">
<path d="M245 206.4 H643 V203.2 H933" stroke="#D89890" stroke-width="1.15"/>
<path d="M245 266.3 H933" stroke="#D89890" stroke-width="1.15"/>
<polyline points="245,285.2 343,285.2 345,286.2 360,286.2 363,287 400,287.3 420,286.8 440,286.2 460,285.6 480,284.8 500,283 510,282.4 520,281.8 550,281.8 560,282.7 580,284 600,285.6 610,287.1 640,287.8 665,287.3 710,286.8 740,285.9 760,284.8 775,283 800,282.6 840,282.7 880,283 933,283.2" stroke="#F6AA4C" stroke-width="1.5"/>
<polyline points="245,323.1 351,323.1 357,322.3 416,322.3 420,323.2 470,323.2 480,324 500,325.3 520,325.8 540,325.8 550,325.3 570,324.3 590,323.6 600,322.7 620,322 640,321.8 700,322.2 745,322.9 752,323.6 795,323.8 802,325 860,324.8 933,324.3" stroke="#F4E41E" stroke-width="1.5"/>
<polyline points="245,384.1 331,384.1 332,386.5 369,386.5 370,388.5 372,386.5 378,386.5 380,388.4 397,388.4 398,386.5 447,386.5 448,384.5 470,384.5 471,383 480,383 481,381.5 487,381.5 488,379.6 495,379.6 496,376.3 525,376.3 527,378.1 542,378.1 543,379.6 559,379.6 560,382 572,382 573,384 583,384 584,386 594,386 595,388.4 685,388.4 686,386.5 729,386.5 730,384.5 752,384.5 753,383 771,383 772,380.1 933,380.1" stroke="#3CE83C" stroke-width="1.4"/>
<polyline points="245.0,403.41 246.5,403.61 248.0,404.26 249.5,403.44 251.0,403.51 252.5,403.66 254.0,402.93 255.5,403.52 257.0,403.73 258.5,404.03 260.0,402.77 261.5,403.15 263.0,402.76 264.5,404.06 266.0,403.85 267.5,402.68 269.0,404.37 270.5,404.34 272.0,403.78 273.5,403.71 275.0,402.88 276.5,402.63 278.0,403.55 279.5,402.71 281.0,402.94 282.5,403.04 284.0,402.65 285.5,403.44 287.0,403.39 288.5,404.12 290.0,403.53 291.5,403.75 293.0,403.5 294.5,403.79 296.0,403.42 297.5,403.1 299.0,404.4 300.5,404.39 302.0,404.11 303.5,403.87 305.0,403.17 306.5,403.01 308.0,403.12 309.5,402.73 311.0,403.98 312.5,403.32 314.0,404.12 315.5,403.3 317.0,404.32 318.5,404.13 320.0,402.6 321.5,402.98 323.0,404.24 324.5,403.45 326.0,404.36 327.5,403.32 329.0,402.73 330.5,403.69 332.0,403.81 333.5,402.76 335.0,402.29 336.5,402.59 338.0,403.59 339.5,403.08 341.0,401.79 342.5,401.88 344.0,401.48 345.5,401.26 347.0,402.45 348.5,401.19 350.0,401.74 351.5,401.4 353.0,400.8 354.5,401.63 356.0,400.41 357.5,401.19 359.0,400.1 360.5,400.54 362.0,400.11 363.5,400.16 365.0,401.37 366.5,401.02 368.0,400.07 369.5,401.06 371.0,399.79 372.5,400.07 374.0,400.85 375.5,400.41 377.0,399.39 378.5,400.93 380.0,399.48 381.5,399.59 383.0,400.55 384.5,399.78 386.0,399.75 387.5,399.38 389.0,399.44 390.5,400.36 392.0,399.78 393.5,400.45 395.0,400.07 396.5,400.25 398.0,401.19 399.5,400.36 401.0,400.55 402.5,401.11 404.0,399.91 405.5,399.89 407.0,401.28 408.5,401.14 410.0,400.15 411.5,400.07 413.0,401.09 414.5,401.48 416.0,400.17 417.5,401.56 419.0,401.47 420.5,401.0 422.0,400.7 423.5,400.16 425.0,400.07 426.5,401.76 428.0,400.49 429.5,401.36 431.0,400.58 432.5,401.63 434.0,401.25 435.5,400.74 437.0,400.56 438.5,401.57 440.0,400.42 441.5,400.81 443.0,401.51 444.5,402.13 446.0,401.81 447.5,401.3 449.0,402.55 450.5,401.37 452.0,401.13 453.5,401.68 455.0,402.1 456.5,401.62 458.0,402.04 459.5,402.59 461.0,403.17 462.5,402.59 464.0,403.21 465.5,404.37 467.0,404.74 468.5,404.37 470.0,404.64 471.5,404.68 473.0,404.1 474.5,404.14 476.0,404.33 477.5,406.16 479.0,406.01 480.5,406.8 482.0,405.6 483.5,407.21 485.0,407.43 486.5,408.38 488.0,408.14 489.5,409.92 491.0,408.92 492.5,410.42 494.0,411.43 495.5,411.9 497.0,411.78 498.5,411.89 500.0,412.23 501.5,412.5 503.0,411.55 504.5,412.2 506.0,412.65 507.5,412.65 509.0,411.81 510.5,412.42 512.0,412.49 513.5,411.9 515.0,411.93 516.5,411.43 518.0,411.73 519.5,411.72 521.0,410.66 522.5,411.53 524.0,412.04 525.5,411.71 527.0,411.3 528.5,410.56 530.0,411.06 531.5,410.65 533.0,410.27 534.5,410.85 536.0,409.21 537.5,410.05 539.0,408.39 540.5,409.06 542.0,408.49 543.5,407.67 545.0,408.16 546.5,407.64 548.0,407.69 549.5,408.08 551.0,406.72 552.5,406.12 554.0,406.48 555.5,407.0 557.0,405.98 558.5,405.77 560.0,406.93 561.5,406.25 563.0,405.62 564.5,406.19 566.0,404.93 567.5,405.3 569.0,404.22 570.5,404.4 572.0,404.83 573.5,404.79 575.0,404.48 576.5,403.44 578.0,403.65 579.5,403.02 581.0,402.55 582.5,403.04 584.0,403.51 585.5,403.38 587.0,402.98 588.5,402.69 590.0,400.76 591.5,399.84 593.0,399.86 594.5,399.17 596.0,398.69 597.5,398.67 599.0,398.68 600.5,398.19 602.0,397.87 603.5,398.81 605.0,399.07 606.5,398.16 608.0,397.52 609.5,397.49 611.0,399.04 612.5,397.59 614.0,398.83 615.5,398.63 617.0,398.2 618.5,399.11 620.0,397.76 621.5,398.02 623.0,398.63 624.5,397.9 626.0,399.39 627.5,398.37 629.0,398.24 630.5,398.11 632.0,399.2 633.5,398.92 635.0,399.29 636.5,399.38 638.0,399.7 639.5,400.01 641.0,399.6 642.5,398.82 644.0,399.42 645.5,398.98 647.0,398.77 648.5,399.7 650.0,400.24 651.5,399.37 653.0,399.64 654.5,399.86 656.0,400.6 657.5,400.37 659.0,400.64 660.5,400.96 662.0,400.32 663.5,401.04 665.0,401.25 666.5,399.79 668.0,401.31 669.5,400.94 671.0,399.88 672.5,400.47 674.0,400.79 675.5,401.31 677.0,400.35 678.5,400.71 680.0,401.27 681.5,401.13 683.0,401.4 684.5,400.54 686.0,400.89 687.5,400.09 689.0,401.03 690.5,401.21 692.0,400.9 693.5,401.04 695.0,400.14 696.5,401.38 698.0,401.54 699.5,401.54 701.0,400.75 702.5,401.21 704.0,400.37 705.5,401.44 707.0,401.35 708.5,400.44 710.0,399.97 711.5,400.62 713.0,400.83 714.5,401.23 716.0,400.73 717.5,399.91 719.0,401.32 720.5,399.99 722.0,401.32 723.5,400.2 725.0,400.49 726.5,401.32 728.0,402.35 729.5,402.46 731.0,403.21 732.5,403.67 734.0,403.96 735.5,403.78 737.0,404.33 738.5,403.6 740.0,404.51 741.5,403.05 743.0,403.38 744.5,404.02 746.0,403.72 747.5,404.66 749.0,404.65 750.5,404.59 752.0,405.32 753.5,404.96 755.0,404.66 756.5,404.94 758.0,405.92 759.5,406.17 761.0,405.07 762.5,406.38 764.0,406.74 765.5,406.09 767.0,406.33 768.5,405.81 770.0,406.56 771.5,406.64 773.0,406.96 774.5,406.05 776.0,407.88 777.5,407.2 779.0,407.13 780.5,407.94 782.0,407.51 783.5,407.38 785.0,407.74 786.5,406.61 788.0,407.46 789.5,407.24 791.0,408.22 792.5,408.15 794.0,406.98 795.5,407.34 797.0,406.72 798.5,407.27 800.0,407.96 801.5,408.11 803.0,407.34 804.5,407.05 806.0,406.83 807.5,407.59 809.0,408.15 810.5,406.71 812.0,407.88 813.5,406.52 815.0,406.83 816.5,406.89 818.0,407.71 819.5,407.05 821.0,407.11 822.5,407.59 824.0,406.66 825.5,407.79 827.0,406.69 828.5,407.39 830.0,406.92 831.5,406.82 833.0,407.42 834.5,407.25 836.0,407.14 837.5,407.21 839.0,407.41 840.5,406.75 842.0,406.83 843.5,407.59 845.0,407.61 846.5,407.41 848.0,407.99 849.5,407.56 851.0,408.0 852.5,406.87 854.0,407.79 855.5,407.91 857.0,408.07 858.5,407.02 860.0,407.01 861.5,408.11 863.0,406.84 864.5,408.24 866.0,408.04 867.5,406.68 869.0,406.87 870.5,407.75 872.0,406.91 873.5,406.61 875.0,407.94 876.5,407.2 878.0,407.86 879.5,406.66 881.0,407.16 882.5,407.67 884.0,406.46 885.5,406.79 887.0,407.66 888.5,408.07 890.0,408.17 891.5,406.63 893.0,407.34 894.5,407.79 896.0,407.33 897.5,407.66 899.0,406.76 900.5,406.55 902.0,406.61 903.5,406.49 905.0,407.41 906.5,407.34 908.0,407.44 909.5,406.68 911.0,406.75 912.5,406.78 914.0,407.92 915.5,408.19 917.0,408.08 918.5,406.58 920.0,406.52 921.5,408.12 923.0,407.24 924.5,407.78 926.0,406.99 927.5,407.24 929.0,407.33 930.5,407.18 932.0,407.48" stroke="#FF0A0A" stroke-width="2.2"/>
<path d="M245 423.2 H933" stroke="#F030F0" stroke-width="1.3"/>
<polyline points="579.0,421.62 580.3,423.2 581.6,421.96 582.9,423.2 584.2,422.33 585.5,421.88 586.8,421.35 588.1,423.2 589.4,423.2 590.7,423.2 592.0,423.2 593.3,421.76 594.6,421.22 595.9,423.2 597.2,421.32 598.5,423.2 599.8,423.2 601.1,423.2 602.4,421.34 603.7,423.2 605.0,423.2 606.3,423.2 607.6,423.2 608.9,421.59 610.2,422.12 611.5,422.59 612.8,421.71 614.1,423.2 615.4,421.28 616.7,423.2 618.0,421.68 619.3,423.2 620.6,422.05 621.9,423.2 623.2,423.2 624.5,423.2 625.8,423.2 627.1,423.2 628.4,421.74 629.7,423.2 631.0,422.04 632.3,422.33 633.6,422.46 634.9,421.33 636.2,423.2 637.5,421.25 638.8,423.2" stroke="#F030F0" stroke-width="0.9"/>
<path d="M389 423.2 L391 421.2 L392 423.2" stroke="#F030F0" stroke-width="0.9"/>
<path d="M245 543.75 H311.5 L313 545.3 H933" stroke="#44AAF0" stroke-width="1.4"/>
</g>
<rect x="244" y="81" width="1.35" height="538" fill="#222222"/>
<rect x="244" y="577.7" width="689" height="1.5" fill="#1A1A1A"/>
<rect x="931.9" y="81" width="1.8" height="538" fill="#5A5A5A"/>
<g clip-path="url(#plot2)">
<text x="267.40" y="587.6" text-anchor="middle" font-size="10.6" fill="#000" stroke="#000" stroke-width="0.15" textLength="17.51" lengthAdjust="spacingAndGlyphs">7:50</text>
<text x="318.11" y="587.6" text-anchor="middle" font-size="10.6" fill="#000" stroke="#000" stroke-width="0.15" textLength="17.51" lengthAdjust="spacingAndGlyphs">7:55</text>
<text x="368.82" y="587.6" text-anchor="middle" font-size="10.6" fill="#000" stroke="#000" stroke-width="0.15" textLength="12.51" lengthAdjust="spacingAndGlyphs">8:0</text>
<text x="419.53" y="587.6" text-anchor="middle" font-size="10.6" fill="#000" stroke="#000" stroke-width="0.15" textLength="12.51" lengthAdjust="spacingAndGlyphs">8:5</text>
<text x="470.24" y="587.6" text-anchor="middle" font-size="10.6" fill="#000" stroke="#000" stroke-width="0.15" textLength="17.51" lengthAdjust="spacingAndGlyphs">8:10</text>
<text x="520.95" y="587.6" text-anchor="middle" font-size="10.6" fill="#000" stroke="#000" stroke-width="0.15" textLength="17.51" lengthAdjust="spacingAndGlyphs">8:15</text>
<text x="571.66" y="587.6" text-anchor="middle" font-size="10.6" fill="#000" stroke="#000" stroke-width="0.15" textLength="17.51" lengthAdjust="spacingAndGlyphs">8:20</text>
<text x="622.37" y="587.6" text-anchor="middle" font-size="10.6" fill="#000" stroke="#000" stroke-width="0.15" textLength="17.51" lengthAdjust="spacingAndGlyphs">8:25</text>
<text x="673.08" y="587.6" text-anchor="middle" font-size="10.6" fill="#000" stroke="#000" stroke-width="0.15" textLength="17.51" lengthAdjust="spacingAndGlyphs">8:30</text>
<text x="723.79" y="587.6" text-anchor="middle" font-size="10.6" fill="#000" stroke="#000" stroke-width="0.15" textLength="17.51" lengthAdjust="spacingAndGlyphs">8:35</text>
<text x="774.50" y="587.6" text-anchor="middle" font-size="10.6" fill="#000" stroke="#000" stroke-width="0.15" textLength="17.51" lengthAdjust="spacingAndGlyphs">8:40</text>
<text x="825.21" y="587.6" text-anchor="middle" font-size="10.6" fill="#000" stroke="#000" stroke-width="0.15" textLength="17.51" lengthAdjust="spacingAndGlyphs">8:45</text>
<text x="875.92" y="587.6" text-anchor="middle" font-size="10.6" fill="#000" stroke="#000" stroke-width="0.15" textLength="17.51" lengthAdjust="spacingAndGlyphs">8:50</text>
<text x="926.63" y="587.6" text-anchor="middle" font-size="10.6" fill="#000" stroke="#000" stroke-width="0.15" textLength="17.51" lengthAdjust="spacingAndGlyphs">8:55</text>
</g>
<polygon points="450.59,467.47 470.53,424.54 474.61,426.44 474.00,411.60 462.27,420.71 466.35,422.60 446.41,465.53" fill="#0A0A0A"/>
<polygon points="598.70,457.91 597.13,419.10 601.63,418.91 594.30,406.00 588.04,419.46 592.53,419.28 594.10,458.09" fill="#0A0A0A"/>
<rect x="603.5" y="408.2" width="35" height="13.4" fill="#FFFFE1" stroke="#000" stroke-width="0.9"/>
<text x="605.6" y="418.9" font-size="9.9" fill="#000" stroke="#000" stroke-width="0.12" textLength="31" lengthAdjust="spacingAndGlyphs">HV Crnt</text>
<text x="934.5" y="89.5" font-size="8.5" font-weight="bold" fill="#000" textLength="45.4" lengthAdjust="spacingAndGlyphs">8:23.15 sec</text>
<rect x="934" y="90.6" width="66" height="1.6" fill="#555"/>
<text x="934.5" y="100.7" font-size="8.5" fill="#E0B8B0" textLength="27.5" lengthAdjust="spacingAndGlyphs">55.0 °C</text>
<text x="934.5" y="110.8" font-size="8.5" fill="#F81A2A" font-weight="bold" textLength="27" lengthAdjust="spacingAndGlyphs">-35.1 A</text>
<text x="934.5" y="120.9" font-size="8.5" fill="#FFA838" textLength="39.8" lengthAdjust="spacingAndGlyphs">4159 RPM</text>
<text x="934.5" y="131.6" font-size="8.5" fill="#F2E020" textLength="34.7" lengthAdjust="spacingAndGlyphs">198 RPM</text>
<text x="934.5" y="142.2" font-size="8.5" fill="#22DD22" textLength="25.8" lengthAdjust="spacingAndGlyphs">38.4 %</text>
<text x="934.5" y="175.4" font-size="8.5" fill="#D4A888" textLength="27.5" lengthAdjust="spacingAndGlyphs">23.0 °C</text>
<text x="934.5" y="185.8" font-size="8.5" fill="#C4F2C4" textLength="25.2" lengthAdjust="spacingAndGlyphs">0 RPM</text>
<text x="934.5" y="196.7" font-size="8.5" fill="#44AAF0" textLength="21.1" lengthAdjust="spacingAndGlyphs">8.7 %</text>
<text x="934.5" y="218.3" font-size="8.5" fill="#F030F0" textLength="42.9" lengthAdjust="spacingAndGlyphs">81.0 Km/Hr</text>
<rect x="934" y="111.9" width="33" height="1.4" fill="#F01A2A"/>
<rect x="6.5" y="605" width="997.5" height="14.5" fill="url(#sbh)"/>
<rect x="1003.4" y="81" width="14.6" height="524" fill="url(#sbv)"/>
<rect x="1003.4" y="605" width="14.6" height="14.6" fill="#ECE9D8"/>
<rect x="7.5" y="607" width="12" height="11" rx="1.5" fill="#EEEDE6" stroke="#E2E0D6" stroke-width="0.6"/>
<path d="M15 609.5 L11.5 612.5 L15 615.5" stroke="#C9C7BA" stroke-width="1.3" fill="none"/>
<rect x="231" y="607" width="12" height="11" rx="1.5" fill="#EEEDE6" stroke="#E2E0D6" stroke-width="0.6"/>
<path d="M235.5 609.5 L239 612.5 L235.5 615.5" stroke="#C9C7BA" stroke-width="1.3" fill="none"/>
<rect x="246.3" y="607" width="12.2" height="11" rx="1.5" fill="url(#arrb)" stroke="#B8CEF8" stroke-width="0.6"/>
<path d="M254 609.3 L250.5 612.5 L254 615.7" stroke="#4D6185" stroke-width="1.6" fill="none"/>
<rect x="919" y="607" width="12" height="11" rx="1.5" fill="url(#arrb)" stroke="#B8CEF8" stroke-width="0.6"/>
<path d="M923.5 609.3 L927 612.5 L923.5 615.7" stroke="#4D6185" stroke-width="1.6" fill="none"/>
<rect x="321" y="607" width="6.4" height="11" rx="1.5" fill="#C8D8FA" stroke="#A8C0F0" stroke-width="0.6"/>
<rect x="934.5" y="607" width="11.5" height="11" rx="1.5" fill="#EEEDE6" stroke="#E2E0D6" stroke-width="0.6"/>
<path d="M942 609.5 L938.5 612.5 L942 615.5" stroke="#C9C7BA" stroke-width="1.3" fill="none"/>
<rect x="990" y="607" width="11.5" height="11" rx="1.5" fill="#EEEDE6" stroke="#E2E0D6" stroke-width="0.6"/>
<path d="M994 609.5 L997.5 612.5 L994 615.5" stroke="#C9C7BA" stroke-width="1.3" fill="none"/>
<rect x="1005" y="82.5" width="10.5" height="12.5" rx="1.5" fill="#EEEDE6" stroke="#E2E0D6" stroke-width="0.6"/>
<path d="M1007 91 L1010.25 87.5 L1013.5 91" stroke="#C9C7BA" stroke-width="1.3" fill="none"/>
<rect x="1005" y="592" width="10.5" height="12.5" rx="1.5" fill="#EEEDE6" stroke="#E2E0D6" stroke-width="0.6"/>
<path d="M1007 596.5 L1010.25 600 L1013.5 596.5" stroke="#C9C7BA" stroke-width="1.3" fill="none"/>
<rect x="931.9" y="604" width="1.8" height="15.6" fill="#5A5A5A"/>
<rect x="243.9" y="604" width="1.5" height="15.6" fill="#9AA8C8"/>
</svg>
<div class="menu">
<span style="left:7.3px;color:#000">File</span>
<span style="left:30.8px;color:#000">Edit</span>
<span style="left:55.7px;color:#000">Sessions</span>
<span style="left:100.3px;color:#000">Channels</span>
<span style="left:147px;color:#ACA899">Templates</span>
<span style="left:197px;color:#000">Tools</span>
<span style="left:228px;color:#000">View</span>
</div>
</body></html>
